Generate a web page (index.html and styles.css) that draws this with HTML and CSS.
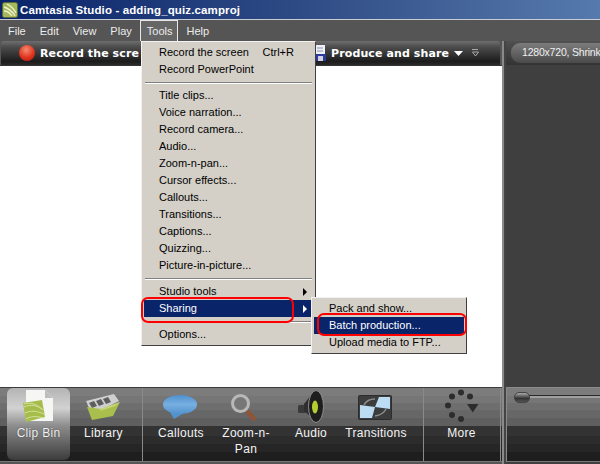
FILE: index.html
```html
<!DOCTYPE html>
<html lang="en">
<head>
<meta charset="utf-8">
<title>Camtasia Studio</title>
<link rel="stylesheet" href="styles.css">
</head>
<body>
<div class="app">
  <header class="titlebar">
    <svg class="app-icon" width="16" height="16" viewBox="0 0 16 16"><rect x=".5" y=".5" width="15" height="15" rx="2" fill="#a6b85c" stroke="#5c6a3a"/><path d="M2 5C6 6 11 10 13 14M2 9c3 0 6 2 8 5M5 2c4 2 7 5 9 9" stroke="#eef2d0" stroke-width="1.3" fill="none"/></svg>
    <span>Camtasia Studio - adding_quiz.camproj</span>
  </header>
  <nav class="menubar">
    <span class="menu-item">File</span>
    <span class="menu-item">Edit</span>
    <span class="menu-item">View</span>
    <span class="menu-item">Play</span>
    <span class="menu-item active">Tools</span>
    <span class="menu-item">Help</span>
  </nav>
  <div class="workspace">
    <section class="left-pane">
      <div class="toolbar">
        <div class="tool-record">
          <span class="record-dot"></span>
          <span class="tool-label">Record the scre</span>
        </div>
        <div class="tool-produce">
          <svg class="floppy" width="12" height="16" viewBox="0 0 12 16"><rect x="1" y="0" width="10" height="16" fill="#eef0f6"/><path d="M3 3h6M3 6h6" stroke="#8890b8"/><rect x="1" y="9" width="11" height="7" fill="#2c3a9c"/><rect x="4" y="11" width="5" height="5" fill="#d0d0e0"/></svg>
          <span class="tool-label">Produce and share</span>
          <svg class="caret" width="9" height="5" viewBox="0 0 9 5"><path d="M0 0h9L4.500 5z" fill="#fff"/></svg>
          <svg class="more-caret" width="7" height="8" viewBox="0 0 7 8"><path d="M0 .5h6M.5 3h6L3.500 7z" fill="none" stroke="#aaa"/></svg>
        </div>
      </div>
      <div class="canvas"></div>
      <div class="tabs">
        <div class="tab-group">
          <div class="tab selected">
            <svg width="63" height="37" viewBox="0 0 63 37">
              <path d="M19 2h19l8 8v23H19z" fill="#f6f6f4"/>
              <path d="M38 2l8 8h-8z" fill="#bdbdbd"/>
              <path d="M16 15l19-3 3 17-19 5z" fill="#a6bd4c"/>
              <path d="M17 19c7-3 13-2 19 3M18 25c6-3 12-2 19 1M17 16c7-2 12 0 18 5M19 31c5-3 10-3 18-1" stroke="#d3e09a" fill="none"/>
            </svg>
            <span>Clip Bin</span>
          </div>
          <div class="tab">
            <svg width="63" height="37" viewBox="0 0 63 37">
              <path d="M14 13l28-7 5 7-27 14z" fill="#cfcfcf"/>
              <path d="M17 15l5-2 3 5-5 2zM24 13l5-2 3 5-5 2zM31 11l5-2 3 5-5 2z" fill="#5e5e5e"/>
              <path d="M15 19l14 2 19-7-7 14-21 4z" fill="#a9bf4d"/>
              <path d="M29 21l19-7-5 4-15 5z" fill="#c6d874"/>
            </svg>
            <span>Library</span>
          </div>
        </div>
        <div class="tab-group">
          <div class="tab">
            <svg width="64" height="37" viewBox="0 0 64 37">
              <defs><linearGradient id="bubble" x1="0" y1="0" x2="0" y2="1"><stop offset="0" stop-color="#4f90cf"/><stop offset=".5" stop-color="#77afe0"/><stop offset="1" stop-color="#5292ce"/></linearGradient></defs>
              <path d="M21 24l4 7 10-6z" fill="#5292ce"/>
              <ellipse cx="31" cy="16.500" rx="17" ry="9.500" fill="url(#bubble)"/>
            </svg>
            <span>Callouts</span>
          </div>
          <div class="tab tab-wide">
            <svg width="64" height="37" viewBox="0 0 64 37">
              <path d="M33 23l8 9" stroke="#8f5535" stroke-width="4.500"/>
              <circle cx="26.500" cy="15.500" r="8" fill="#777" stroke="#b8b8b8" stroke-width="3"/>
            </svg>
            <span>Zoom-n-Pan</span>
          </div>
          <div class="tab">
            <svg width="64" height="37" viewBox="0 0 64 37">
              <rect x="19" y="17" width="8" height="8" rx="1.500" fill="#3a3a3a"/>
              <path d="M25 16L35 3l3 31-13-11z" fill="#2f2f2f"/>
              <ellipse cx="37" cy="18.500" rx="7.500" ry="16" fill="#1e1e1e" stroke="#8e8e8e"/>
              <ellipse cx="36" cy="19" rx="3" ry="6.500" fill="#b6cc30"/>
            </svg>
            <span>Audio</span>
          </div>
          <div class="tab">
            <svg width="64" height="37" viewBox="0 0 64 37">
              <rect x="14.500" y="7.500" width="33" height="24" rx="1" fill="#3c3c3c" stroke="#2c2c2c"/>
              <path d="M31 19L16 17v13h12zM31 19l4-10h11v12z" fill="#bcdcf4"/>
              <path d="M20 17q3-6 11-6M42 21q-3 6-11 7" stroke="#8c8c8c" stroke-width="1.500" fill="none"/>
            </svg>
            <span>Transitions</span>
          </div>
        </div>
        <div class="tab-group more-group">
          <div class="tab">
            <svg width="75" height="37" viewBox="0 0 75 37">
              <g fill="#2c2c2c"><circle cx="37" cy="4.500" r="3"/><circle cx="28" cy="8.500" r="3"/><circle cx="46" cy="8.500" r="3"/><circle cx="24" cy="17.500" r="3"/><circle cx="28" cy="27" r="3"/><circle cx="37" cy="31" r="3"/></g>
              <path d="M43 16h11.500l-5.750 8.500z" fill="#2c2c2c"/>
            </svg>
            <span>More</span>
          </div>
        </div>
      </div>
    </section>
    <div class="splitter"></div>
    <aside class="right-pane">
      <div class="preview-bar"><span class="size-pill">1280x720, Shrink</span></div>
      <div class="preview"></div>
      <div class="slider-panel"><span class="slider-track"></span><span class="slider-thumb"></span></div>
    </aside>
  </div>

  <div class="menu tools-menu">
    <div class="row with-shortcut"><span>Record the screen</span><span>Ctrl+R</span></div>
    <div class="row"><span>Record PowerPoint</span></div>
    <hr>
    <div class="row"><span>Title clips...</span></div>
    <div class="row"><span>Voice narration...</span></div>
    <div class="row"><span>Record camera...</span></div>
    <div class="row"><span>Audio...</span></div>
    <div class="row"><span>Zoom-n-pan...</span></div>
    <div class="row"><span>Cursor effects...</span></div>
    <div class="row"><span>Callouts...</span></div>
    <div class="row"><span>Transitions...</span></div>
    <div class="row"><span>Captions...</span></div>
    <div class="row"><span>Quizzing...</span></div>
    <div class="row"><span>Picture-in-picture...</span></div>
    <hr>
    <div class="row has-sub"><span>Studio tools</span></div>
    <div class="row has-sub hot"><span>Sharing</span></div>
    <hr>
    <div class="row"><span>Options...</span></div>
  </div>
  <div class="menu share-menu">
    <div class="row"><span>Pack and show...</span></div>
    <div class="row hot"><span>Batch production...</span></div>
    <div class="row"><span>Upload media to FTP...</span></div>
  </div>
  <div class="callout callout-sharing"></div>
  <div class="callout callout-batch"></div>
</div>
</body>
</html>
```
FILE: styles.css
```css
* { box-sizing: border-box; }
html, body { margin: 0; padding: 0; }
body { width: 600px; height: 464px; overflow: hidden; background: #fff; }
.app {
  position: relative;
  width: 600px;
  height: 464px;
  display: flex;
  flex-direction: column;
  font-family: "Liberation Sans", Arial, sans-serif;
  font-size: 11px;
  background: #555;
  overflow: hidden;
}
.titlebar {
  height: 20px;
  flex: none;
  display: flex;
  align-items: center;
  gap: 2px;
  padding-left: 2px;
  background: linear-gradient(90deg, #0a246a 0%, #2f4b85 50%, #567aad 100%);
  border-bottom: 1px solid #c8ccd4;
  color: #fff;
  font-weight: 700;
  font-size: 11.500px;
  letter-spacing: .13px;
}
.menubar {
  height: 21px;
  flex: none;
  display: flex;
  padding-left: 1px;
  background: #555;
  color: #ececec;
}
.menu-item { padding: 0 7px; height: 21px; line-height: 22px; }
.menu-item.active {
  margin: 0 1px;
  padding: 0 5px 0 6px;
  background: #666;
  border: 1px solid #e8e8e8;
  border-bottom: 0;
  line-height: 21px;
}
.workspace { flex: 1; display: flex; min-height: 0; }
.left-pane { width: 502px; flex: none; display: flex; flex-direction: column; padding-bottom: 2px; }
.toolbar {
  height: 24px;
  flex: none;
  display: flex;
  justify-content: space-between;
  margin: 0 2px 0 1px;
  border-radius: 3px 3px 0 0;
  background: linear-gradient(#6e6e6e, #4c4c4c 25%, #1c1c1c 85%, #2a2a2a);
  color: #fff;
}
.tool-record { display: flex; align-items: center; gap: 5px; padding-left: 18px; }
.record-dot {
  width: 16px;
  height: 16px;
  border-radius: 50%;
  background: radial-gradient(circle at 45% 30%, #f58a70, #e0341e 55%, #a81a0c);
}
.tool-label { font-family: "DejaVu Sans", sans-serif; font-weight: 700; font-size: 11px; letter-spacing: .1px; }
.tool-produce { display: flex; align-items: center; gap: 5px; padding-right: 21px; }
.more-caret { margin-left: 4px; }
.canvas { flex: 1; background: #fff; border-top: 1px solid #333; }
.tabs {
  height: 75px;
  flex: none;
  display: flex;
  background: linear-gradient(#7c7c7c 0 8px, #767676 8px 15px, #6e6e6e 15px 22px, #676767 22px 30px, #5f5f5f 30px 38px, #333 38px 48px, #2c2c2c 48px 56px, #262626 56px 64px, #1e1e1e 64px);
  border-top: 1px solid #3c3c3c;
  border-bottom: 1px solid #777;
  color: #f4f4f4;
  font-size: 12px;
}
.tab-group { display: flex; flex: none; gap: 1px; border-right: 1px solid #8a8a8a; }
.tab-group:first-child { width: 143px; padding-left: 7px; gap: 2px; }
.tab-group:nth-child(2) { width: 281px; padding-left: 6px; }
.more-group { width: 77px; }
.tab {
  width: 64px;
  display: flex;
  flex-direction: column;
  align-items: center;
  text-align: center;
  line-height: 16px;
  letter-spacing: .3px;
}
.tab-group:first-child .tab { width: 63px; }
.tab svg { flex: none; display: block; }
.tab-wide span { width: 56px; }
.tab.selected {
  border-radius: 6px;
  height: 72px;
  background: linear-gradient(#b4b4b4, #d2d2d2 28%, #8e8e8e 52%, #3c3c3c);
  text-shadow: 0 0 1px #333;
}
.more-group .tab { width: 75px; }
.splitter { width: 4px; flex: none; background: linear-gradient(90deg, #8a8a8a 50%, #444 50%); }
.right-pane { flex: 1; display: flex; flex-direction: column; background: #3f3f3f; padding-bottom: 2px; }
.preview-bar {
  height: 24px;
  flex: none;
  display: flex;
  align-items: center;
  padding-left: 5px;
  overflow: hidden;
  white-space: nowrap;
  background: linear-gradient(#505050, #333);
}
.size-pill {
  flex: 1;
  height: 20px;
  line-height: 19px;
  padding-left: 11px;
  border-radius: 9px 0 0 9px;
  background: linear-gradient(#7c7c7c, #4a4a4a);
  color: #f0f0f0;
  font-size: 10.500px;
  letter-spacing: -.2px;
}
.preview { flex: 1; }
.slider-panel {
  height: 75px;
  flex: none;
  position: relative;
  border: 1px solid #8a8a8a;
  border-right: 0;
  border-bottom-color: #777;
  background: linear-gradient(#7c7c7c 0 8px, #767676 8px 15px, #6e6e6e 15px 22px, #676767 22px 30px, #5f5f5f 30px 38px, #333 38px 48px, #2c2c2c 48px 56px, #262626 56px 64px, #1e1e1e 64px);
}
.slider-track {
  display: block;
  margin: 7px 0 0 16px;
  height: 3px;
  background: linear-gradient(#2a2a2a 50%, #a0a0a0 50%);
}
.slider-thumb {
  position: absolute;
  left: 7px;
  top: 4px;
  width: 16px;
  height: 11px;
  border-radius: 5px;
  background: linear-gradient(#aaa, #333 60%, #555);
  border: 1px solid #444;
}
.menu {
  position: absolute;
  background: #d4d0c8;
  color: #000;
  padding: 2px;
  border: 1px solid;
  border-color: #f4f2ee #404040 #404040 #f4f2ee;
}
.menu hr { margin: 4px 1px 3px; border: 0; border-top: 1px solid #808080; border-bottom: 1px solid #fff; height: 2px; }
.row {
  height: 17px;
  line-height: 16px;
  padding: 0 6px 0 15px;
  display: flex;
  justify-content: space-between;
  position: relative;
  white-space: nowrap;
}
.row.with-shortcut { padding-right: 19px; }
.row.hot { background: #0a246a; color: #fff; }
.has-sub::after {
  content: "";
  position: absolute;
  right: 6px;
  top: 5px;
  border-left: 4px solid currentColor;
  border-top: 4px solid transparent;
  border-bottom: 4px solid transparent;
}
.tools-menu { left: 141px; top: 41px; width: 175px; }
.share-menu { left: 311px; top: 297px; width: 156px; }
.callout { position: absolute; border: 2px solid #f00; border-radius: 7px; }
.callout-sharing { left: 141px; top: 297px; width: 153px; height: 26px; }
.callout-batch { left: 317px; top: 313px; width: 150px; height: 23px; }
```
